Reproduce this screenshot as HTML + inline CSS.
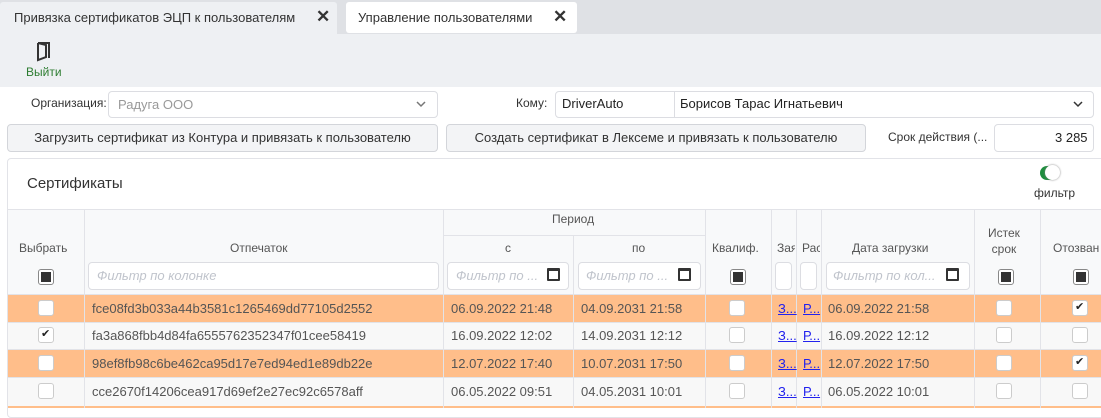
<!DOCTYPE html><html><head><meta charset="utf-8"><style>
*{box-sizing:border-box;margin:0;padding:0}
body{width:1101px;height:408px;overflow:hidden;background:#fff;font-family:"Liberation Sans",sans-serif;font-size:13px;color:#333;position:relative}
.a{position:absolute}
.inp{position:absolute;border:1px solid #dcdde2;border-radius:4px;background:#fff}
.btn{position:absolute;border:1px solid #d3d5da;border-radius:4px;background:#f3f4f6;text-align:center;line-height:26px;font-size:13px;color:#333}
.vl{position:absolute;width:1px;background:#e2e3e8}
.hl{position:absolute;height:1px;background:#e2e3e8}
.cb{position:absolute;width:16px;height:16px;border:1px solid #ccc;border-radius:3px;background:#fff}
.cbh{position:absolute;width:16px;height:16px;border:1px solid #888;border-radius:3px;background:#fff}
.cbh:after{content:"";position:absolute;left:2px;top:2px;width:10px;height:10px;background:#333}
.ck:after{content:"✔";position:absolute;left:2px;top:-1px;font-size:11px;color:#222}
.ph{color:#c0c4cc !important;font-style:italic;font-size:13px}
.t{position:absolute;font-size:13px;color:#555;white-space:nowrap}
.h{position:absolute;font-size:12px;color:#555;white-space:nowrap}
.lk{position:absolute;color:#2222ee;text-decoration:underline;font-size:13px}
.cal{position:absolute;width:13px;height:13px;border:2px solid #333;border-top-width:3px;border-radius:1px}
</style></head><body>
<div class="a" style="left:0;top:0;width:1101px;height:34px;background:#dfe1e5"></div>
<div class="a" style="left:0;top:2px;width:337px;height:32px;background:#eef0f3;border-radius:3px 3px 0 0"></div>
<div class="t" style="left:14px;top:10px;color:#333">Привязка сертификатов ЭЦП к пользователям</div>
<div class="t" style="left:316px;top:7px;font-size:17px;font-weight:bold;color:#333">✕</div>
<div class="a" style="left:346px;top:2px;width:231px;height:31px;background:#fff;border-radius:3px"></div>
<div class="t" style="left:358px;top:10px;color:#333">Управление пользователями</div>
<div class="t" style="left:553px;top:7px;font-size:17px;font-weight:bold;color:#333">✕</div>
<div class="a" style="left:0;top:34px;width:1101px;height:53px;background:#eef0f3"></div>
<svg class="a" style="left:36px;top:41px" width="16" height="22" viewBox="0 0 16 22"><path d="M2 2h11v15M2 2v17l8-3V4L2 2" fill="none" stroke="#333" stroke-width="2"/></svg>
<div class="t" style="left:26px;top:65px;font-size:12px;color:#2e7d32">Выйти</div>
<div class="h" style="left:31px;top:96px;color:#333">Организация:</div>
<div class="inp" style="left:108px;top:91px;width:330px;height:27px"></div>
<div class="t" style="left:118px;top:97px;color:#999">Радуга ООО</div>
<svg class="a" style="left:416px;top:100px" width="10" height="8"><path d="M1 2l4 4 4-4" fill="none" stroke="#777" stroke-width="1.5"/></svg>
<div class="h" style="left:516px;top:96px;color:#333">Кому:</div>
<div class="inp" style="left:555px;top:91px;width:539px;height:27px"></div>
<div class="vl" style="left:674px;top:92px;height:25px;background:#dcdde2"></div>
<div class="t" style="left:562px;top:96px;color:#222">DriverAuto</div>
<div class="t" style="left:680px;top:96px;color:#222">Борисов Тарас Игнатьевич</div>
<svg class="a" style="left:1073px;top:100px" width="10" height="8"><path d="M1 2l4 4 4-4" fill="none" stroke="#333" stroke-width="1.5"/></svg>
<div class="btn" style="left:7px;top:124px;width:431px;height:28px">Загрузить сертификат из Контура и привязать к пользователю</div>
<div class="btn" style="left:446px;top:124px;width:420px;height:28px">Создать сертификат в Лексеме и привязать к пользователю</div>
<div class="h" style="left:888px;top:130px;color:#333">Срок действия (...</div>
<div class="inp" style="left:994px;top:124px;width:100px;height:28px"></div>
<div class="t" style="left:1055px;top:130px;color:#222">3 285</div>
<div class="a" style="left:7px;top:158px;width:1100px;height:260px;border:1px solid #e2e3e8;border-radius:4px"></div>
<div class="t" style="left:27px;top:175px;font-size:15px;color:#333">Сертификаты</div>
<div class="a" style="left:1040px;top:166px;width:16px;height:14px;background:#1e8e3e;border-radius:7px"></div>
<div class="a" style="left:1045px;top:165px;width:15px;height:15px;background:#fff;border-radius:50%;box-shadow:0 0 2px #888"></div>
<div class="h" style="left:1034px;top:186px;color:#333">фильтр</div>
<div class="a" style="left:8px;top:210px;width:1093px;height:84px;background:#f8f9fa"></div>
<div class="hl" style="left:8px;top:209px;width:1093px"></div>
<div class="hl" style="left:443px;top:235px;width:262px"></div>
<div class="vl" style="left:84px;top:210px;height:198px"></div>
<div class="vl" style="left:443px;top:210px;height:198px"></div>
<div class="vl" style="left:573px;top:235px;height:173px"></div>
<div class="vl" style="left:705px;top:210px;height:198px"></div>
<div class="vl" style="left:771px;top:210px;height:198px"></div>
<div class="vl" style="left:796px;top:210px;height:198px"></div>
<div class="vl" style="left:821px;top:210px;height:198px"></div>
<div class="vl" style="left:974px;top:210px;height:198px"></div>
<div class="vl" style="left:1040px;top:210px;height:198px"></div>
<div class="h" style="left:19px;top:241px">Выбрать</div>
<div class="h" style="left:230px;top:241px">Отпечаток</div>
<div class="h" style="left:552px;top:212px">Период</div>
<div class="h" style="left:505px;top:241px">с</div>
<div class="h" style="left:632px;top:241px">по</div>
<div class="h" style="left:712px;top:241px">Квалиф.</div>
<div class="h" style="left:777px;top:241px;width:18px;overflow:hidden">Заявка</div>
<div class="h" style="left:802px;top:241px;width:18px;overflow:hidden">Расп</div>
<div class="h" style="left:852px;top:241px">Дата загрузки</div>
<div class="h" style="left:988px;top:225px;text-align:center;line-height:16px">Истек<br>срок</div>
<div class="h" style="left:1053px;top:241px">Отозван</div>
<div class="cbh" style="left:38px;top:269px"></div>
<div class="inp" style="left:88px;top:262px;width:351px;height:28px"></div><div class="t ph" style="left:97px;top:268px">Фильтр по колонке</div>
<div class="inp" style="left:447px;top:262px;width:122px;height:28px"></div><div class="t ph" style="left:456px;top:268px">Фильтр по ...</div><div class="cal" style="left:547px;top:268px"></div>
<div class="inp" style="left:578px;top:262px;width:123px;height:28px"></div><div class="t ph" style="left:586px;top:268px">Фильтр по ...</div><div class="cal" style="left:678px;top:268px"></div>
<div class="cbh" style="left:730px;top:269px"></div>
<div class="inp" style="left:775px;top:262px;width:17px;height:28px"></div>
<div class="inp" style="left:800px;top:262px;width:17px;height:28px"></div>
<div class="inp" style="left:826px;top:262px;width:144px;height:28px"></div><div class="t ph" style="left:833px;top:268px">Фильтр по кол...</div><div class="cal" style="left:946px;top:268px"></div>
<div class="cbh" style="left:998px;top:269px"></div>
<div class="cbh" style="left:1073px;top:269px"></div>
<!-- rows -->
<div class="a" style="left:8px;top:294px;width:1093px;height:28px;background:#ffbe8a"></div>
<div class="a" style="left:8px;top:322px;width:1093px;height:27px;background:#f8f8f8"></div>
<div class="a" style="left:8px;top:349px;width:1093px;height:28px;background:#ffbe8a"></div>
<div class="a" style="left:8px;top:377px;width:1093px;height:29px;background:#f8f8f8"></div>
<div class="a" style="left:8px;top:406px;width:1093px;height:2px;background:#ffbe8a"></div>
<div class="hl" style="left:8px;top:294px;width:1093px"></div><div class="hl" style="left:8px;top:322px;width:1093px"></div><div class="hl" style="left:8px;top:349px;width:1093px"></div><div class="hl" style="left:8px;top:377px;width:1093px"></div>
<div class="vl" style="left:84px;top:294px;height:114px"></div><div class="vl" style="left:443px;top:294px;height:114px"></div><div class="vl" style="left:573px;top:294px;height:114px"></div><div class="vl" style="left:705px;top:294px;height:114px"></div><div class="vl" style="left:771px;top:294px;height:114px"></div><div class="vl" style="left:796px;top:294px;height:114px"></div><div class="vl" style="left:821px;top:294px;height:114px"></div><div class="vl" style="left:974px;top:294px;height:114px"></div><div class="vl" style="left:1040px;top:294px;height:114px"></div>

<div class="cb" style="left:38px;top:300px"></div><div class="t" style="left:92px;top:301px">fce08fd3b033a44b3581c1265469dd77105d2552</div><div class="t" style="left:451px;top:301px">06.09.2022 21:48</div><div class="t" style="left:581px;top:301px">04.09.2031 21:58</div><div class="cb" style="left:729px;top:300px"></div><div class="lk" style="left:778px;top:301px">З...</div><div class="lk" style="left:803px;top:301px">Р...</div><div class="t" style="left:828px;top:301px">06.09.2022 21:58</div><div class="cb" style="left:996px;top:300px"></div><div class="cb ck" style="left:1072px;top:300px"></div>

<div class="cb ck" style="left:38px;top:327px"></div><div class="t" style="left:92px;top:328px">fa3a868fbb4d84fa6555762352347f01cee58419</div><div class="t" style="left:451px;top:328px">16.09.2022 12:02</div><div class="t" style="left:581px;top:328px">14.09.2031 12:12</div><div class="cb" style="left:729px;top:327px"></div><div class="lk" style="left:778px;top:328px">З...</div><div class="lk" style="left:803px;top:328px">Р...</div><div class="t" style="left:828px;top:328px">16.09.2022 12:12</div><div class="cb" style="left:996px;top:327px"></div><div class="cb" style="left:1072px;top:327px"></div>

<div class="cb" style="left:38px;top:355px"></div><div class="t" style="left:92px;top:356px">98ef8fb98c6be462ca95d17e7ed94ed1e89db22e</div><div class="t" style="left:451px;top:356px">12.07.2022 17:40</div><div class="t" style="left:581px;top:356px">10.07.2031 17:50</div><div class="cb" style="left:729px;top:355px"></div><div class="lk" style="left:778px;top:356px">З...</div><div class="lk" style="left:803px;top:356px">Р...</div><div class="t" style="left:828px;top:356px">12.07.2022 17:50</div><div class="cb" style="left:996px;top:355px"></div><div class="cb ck" style="left:1072px;top:355px"></div>

<div class="cb" style="left:38px;top:383px"></div><div class="t" style="left:92px;top:384px">cce2670f14206cea917d69ef2e27ec92c6578aff</div><div class="t" style="left:451px;top:384px">06.05.2022 09:51</div><div class="t" style="left:581px;top:384px">04.05.2031 10:01</div><div class="cb" style="left:729px;top:383px"></div><div class="lk" style="left:778px;top:384px">З...</div><div class="lk" style="left:803px;top:384px">Р...</div><div class="t" style="left:828px;top:384px">06.05.2022 10:01</div><div class="cb" style="left:996px;top:383px"></div><div class="cb" style="left:1072px;top:383px"></div>
</body></html>
